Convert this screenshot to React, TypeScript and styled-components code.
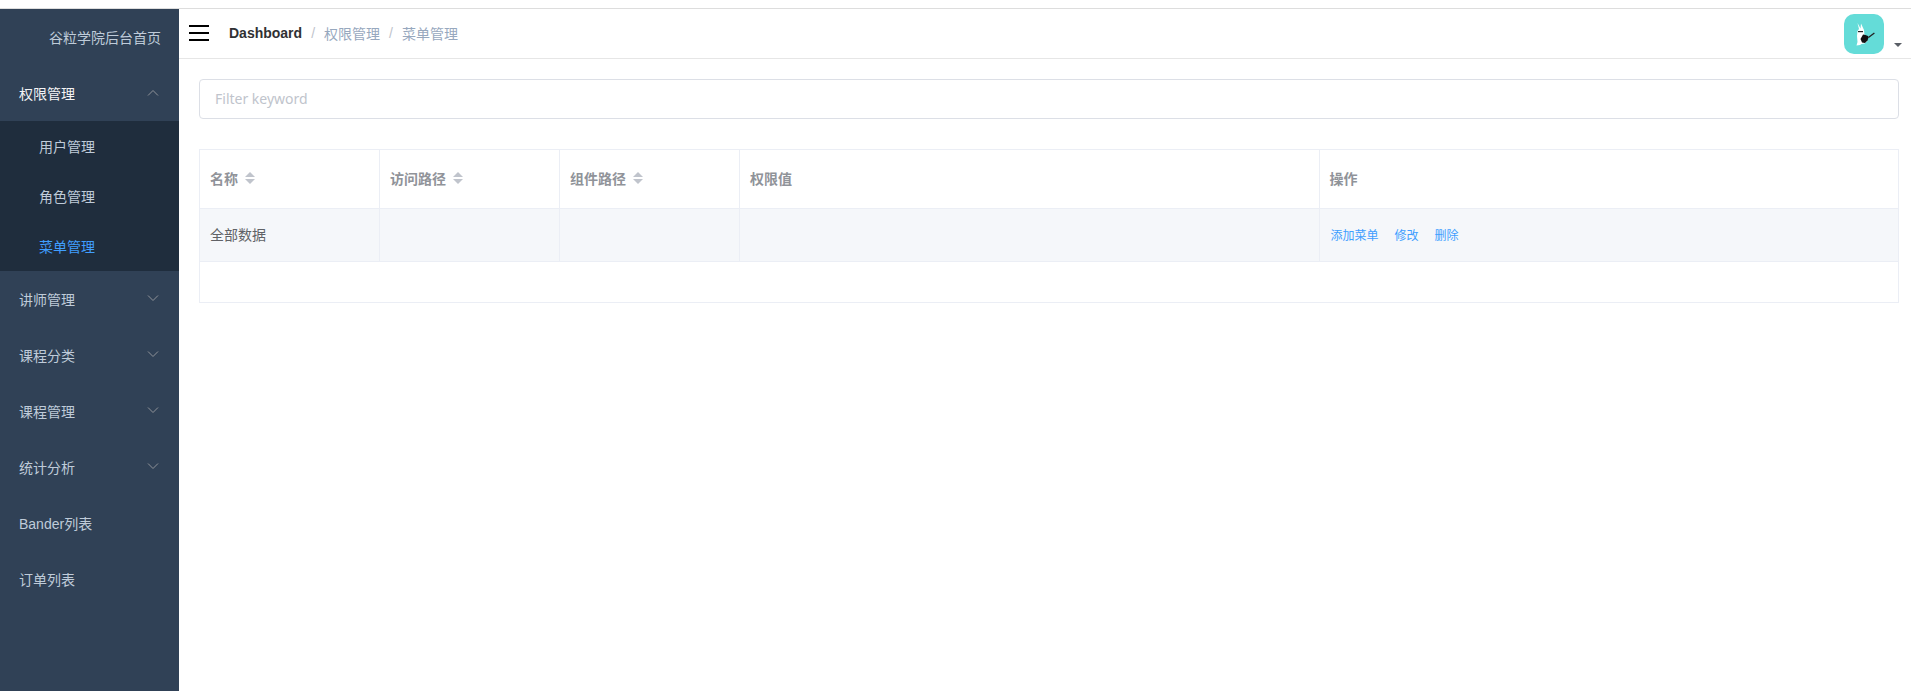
import React from 'react';
import styled, { createGlobalStyle } from 'styled-components';

const FONT = '"Liberation Sans", Arial, "Noto Sans CJK SC", sans-serif';

const menu = [
    { title: '讲师管理', arrow: true },
    { title: '课程分类', arrow: true },
    { title: '课程管理', arrow: true },
    { title: '统计分析', arrow: true },
    { title: 'Bander列表', arrow: false },
    { title: '订单列表', arrow: false },
];

const subMenu = [
    { title: '用户管理', active: false },
    { title: '角色管理', active: false },
    { title: '菜单管理', active: true },
];

const columns = [
    { title: '名称', sortable: true },
    { title: '访问路径', sortable: true },
    { title: '组件路径', sortable: true },
    { title: '权限值', sortable: false },
    { title: '操作', sortable: false },
];

const Arrow = ({ up }: { up?: boolean }) => (
    <ArrowIcon viewBox="0 0 12 12" $up={up}>
        <polyline points="1,3.5 6,8.5 11,3.5" fill="none" stroke="currentColor" strokeWidth="1" />
    </ArrowIcon>
);

const Hamburger = () => (
    <HamburgerIcon viewBox="0 0 20 16">
        <rect x="0" y="0" width="20" height="2" />
        <rect x="0" y="7" width="20" height="2" />
        <rect x="0" y="14" width="20" height="2" />
    </HamburgerIcon>
);

// the little rabbit with a guitar in the avatar
const Rabbit = () => (
    <svg viewBox="0 0 40 40" width="40" height="40">
        <path d="M13.500 9l3 5.500 .5-5 3 6.500 .5 5 3 6-3 2.500-3 .5-1.500 1-3.500 .5 1-3.500-.5-6 .5-5 1.500-2z" fill="#fff" />
        <rect x="14" y="17" width="5" height="1.200" fill="#222" />
        <path d="M16.500 25l2.500-4.500 2.500 .5 2.500 1 .5 1.500-1 3-2.500 2.500-3-.5z" fill="#111" />
        <path d="M24 23l6-4.500.8 1-6 4.500z" fill="#222" />
    </svg>
);

const App = () => {
    return (
        <>
            <GlobalStyle />
            <Page>
                <Sidebar>
                    <LogoLink>谷粒学院后台首页</LogoLink>
                    <MenuItem $opened>
                        权限管理
                        <Arrow up />
                    </MenuItem>
                    <SubMenu>
                        {subMenu.map((item) => (
                            <SubMenuItem key={item.title} $active={item.active}>
                                {item.title}
                            </SubMenuItem>
                        ))}
                    </SubMenu>
                    {menu.map((item) => (
                        <MenuItem key={item.title}>
                            {item.title}
                            {item.arrow && <Arrow />}
                        </MenuItem>
                    ))}
                </Sidebar>
                <Main>
                    <Navbar>
                        <Hamburger />
                        <Breadcrumb>
                            <strong>Dashboard</strong>
                            <Separator>/</Separator>
                            <span>权限管理</span>
                            <Separator>/</Separator>
                            <span>菜单管理</span>
                        </Breadcrumb>
                        <AvatarWrap>
                            <Avatar>
                                <Rabbit />
                            </Avatar>
                            <Caret />
                        </AvatarWrap>
                    </Navbar>
                    <Content>
                        <FilterInput placeholder="Filter keyword" />
                        <Table>
                            <colgroup>
                                <NarrowCol />
                                <NarrowCol />
                                <NarrowCol />
                                <col />
                                <col />
                            </colgroup>
                            <thead>
                                <tr>
                                    {columns.map((col) => (
                                        <HeadCell key={col.title}>
                                            <HeadInner>
                                                {col.title}
                                                {col.sortable && (
                                                    <SortCaret>
                                                        <CaretUp />
                                                        <CaretDown />
                                                    </SortCaret>
                                                )}
                                            </HeadInner>
                                        </HeadCell>
                                    ))}
                                </tr>
                            </thead>
                            <tbody>
                                <BodyRow>
                                    <BodyCell>全部数据</BodyCell>
                                    <BodyCell />
                                    <BodyCell />
                                    <BodyCell />
                                    <BodyCell>
                                        <Actions>
                                            <ActionLink>添加菜单</ActionLink>
                                            <ActionLink>修改</ActionLink>
                                            <ActionLink>删除</ActionLink>
                                        </Actions>
                                    </BodyCell>
                                </BodyRow>
                                <tr>
                                    <EmptyCell colSpan={5} />
                                </tr>
                            </tbody>
                        </Table>
                    </Content>
                </Main>
            </Page>
        </>
    );
};

const GlobalStyle = createGlobalStyle`
    html, body {
        margin: 0;
        height: 100%;
        overflow: hidden;
        background: #fff;
        font-family: ${FONT};
    }
    * {
        box-sizing: border-box;
    }
`;

const Page = styled.div`
    height: 691px;
    margin-top: 8px;
    border-top: 1px solid #dddddd;
    display: flex;
`;

const Sidebar = styled.aside`
    width: 179px;
    height: 100%;
    flex-shrink: 0;
    background: #304156;
`;

const LogoLink = styled.div`
    height: 56px;
    display: flex;
    align-items: center;
    justify-content: flex-end;
    padding-right: 18px;
    font-size: 14px;
    color: #bfcbd9;
`;

const MenuItem = styled.div<{ $opened?: boolean }>`
    height: 56px;
    display: flex;
    align-items: center;
    justify-content: space-between;
    padding: 0 20px 0 19px;
    font-size: 14px;
    color: ${(p) => (p.$opened ? '#f4f4f5' : '#bfcbd9')};
`;

const ArrowIcon = styled.svg<{ $up?: boolean }>`
    width: 12px;
    height: 12px;
    margin-top: ${(p) => (p.$up ? '-1px' : '-3px')};
    color: #909399;
    transform: ${(p) => (p.$up ? 'rotate(180deg)' : 'none')};
`;

const SubMenu = styled.div`
    background: #1f2d3d;
`;

const SubMenuItem = styled.div<{ $active?: boolean }>`
    height: 50px;
    display: flex;
    align-items: center;
    padding-left: 39px;
    font-size: 14px;
    color: ${(p) => (p.$active ? '#409eff' : '#bfcbd9')};
`;

const Main = styled.main`
    flex: 1;
    min-width: 0;
`;

const Navbar = styled.header`
    height: 50px;
    display: flex;
    align-items: center;
    padding-left: 10px;
    border-bottom: 1px solid #e6e6e6;
`;

const HamburgerIcon = styled.svg`
    width: 20px;
    height: 16px;
    margin-top: -1px;
    fill: #000;
`;

const Breadcrumb = styled.nav`
    display: flex;
    align-items: center;
    margin-left: 20px;
    margin-top: -1px;
    font-size: 14px;
    color: #97a8be;

    strong {
        color: #303133;
        font-weight: 700;
    }
`;

const Separator = styled.span`
    margin: 0 9px;
    color: #c0c4cc;
`;

const AvatarWrap = styled.div`
    margin-left: auto;
    display: flex;
    align-items: flex-end;
    margin-right: 9px;
`;

const Avatar = styled.div`
    width: 40px;
    height: 40px;
    border-radius: 10px;
    background: #64dcd8;
`;

const Caret = styled.span`
    width: 0;
    height: 0;
    margin: 0 0 7px 10px;
    border-style: solid;
    border-width: 4px 4px 0 4px;
    border-color: #5a5e66 transparent transparent transparent;
`;

const Content = styled.section`
    padding: 20px 12px 0 20px;
`;

const FilterInput = styled.input`
    display: block;
    width: 100%;
    height: 40px;
    margin-bottom: 30px;
    padding: 0 15px 1px;
    border: 1px solid #dcdfe6;
    border-radius: 4px;
    outline: none;
    font-family: "Noto Sans", sans-serif;
    font-size: 14px;
    color: #606266;

    &::placeholder {
        color: #c0c4cc;
    }
`;

const Table = styled.table`
    width: 100%;
    table-layout: fixed;
    border-collapse: collapse;
    border: 1px solid #ebeef5;
    font-size: 14px;
`;

const NarrowCol = styled.col`
    width: 180px;
`;

const HeadCell = styled.th`
    height: 59px;
    padding: 0 10px;
    border-right: 1px solid #ebeef5;
    border-bottom: 1px solid #ebeef5;
    text-align: left;
    font-size: 14px;
    font-weight: 700;
    color: #909399;
`;

const HeadInner = styled.div`
    display: flex;
    align-items: center;
    gap: 7px;
    margin-top: -2px;
`;

const SortCaret = styled.span`
    display: flex;
    flex-direction: column;
    gap: 2px;
`;

const CaretUp = styled.i`
    width: 0;
    height: 0;
    border-style: solid;
    border-width: 0 5px 5px 5px;
    border-color: transparent transparent #c0c4cc transparent;
`;

const CaretDown = styled.i`
    width: 0;
    height: 0;
    border-style: solid;
    border-width: 5px 5px 0 5px;
    border-color: #c0c4cc transparent transparent transparent;
`;

const BodyRow = styled.tr`
    background: #f5f7fa;
`;

const BodyCell = styled.td`
    height: 53px;
    padding: 0 10px 2px;
    border-right: 1px solid #ebeef5;
    border-bottom: 1px solid #ebeef5;
    color: #606266;
`;

const EmptyCell = styled.td`
    height: 41px;
`;

const Actions = styled.div`
    display: flex;
    gap: 16px;
    margin: 1px 0 0 1px;
`;

const ActionLink = styled.a`
    font-size: 12px;
    color: #409eff;
`;

export default App;
